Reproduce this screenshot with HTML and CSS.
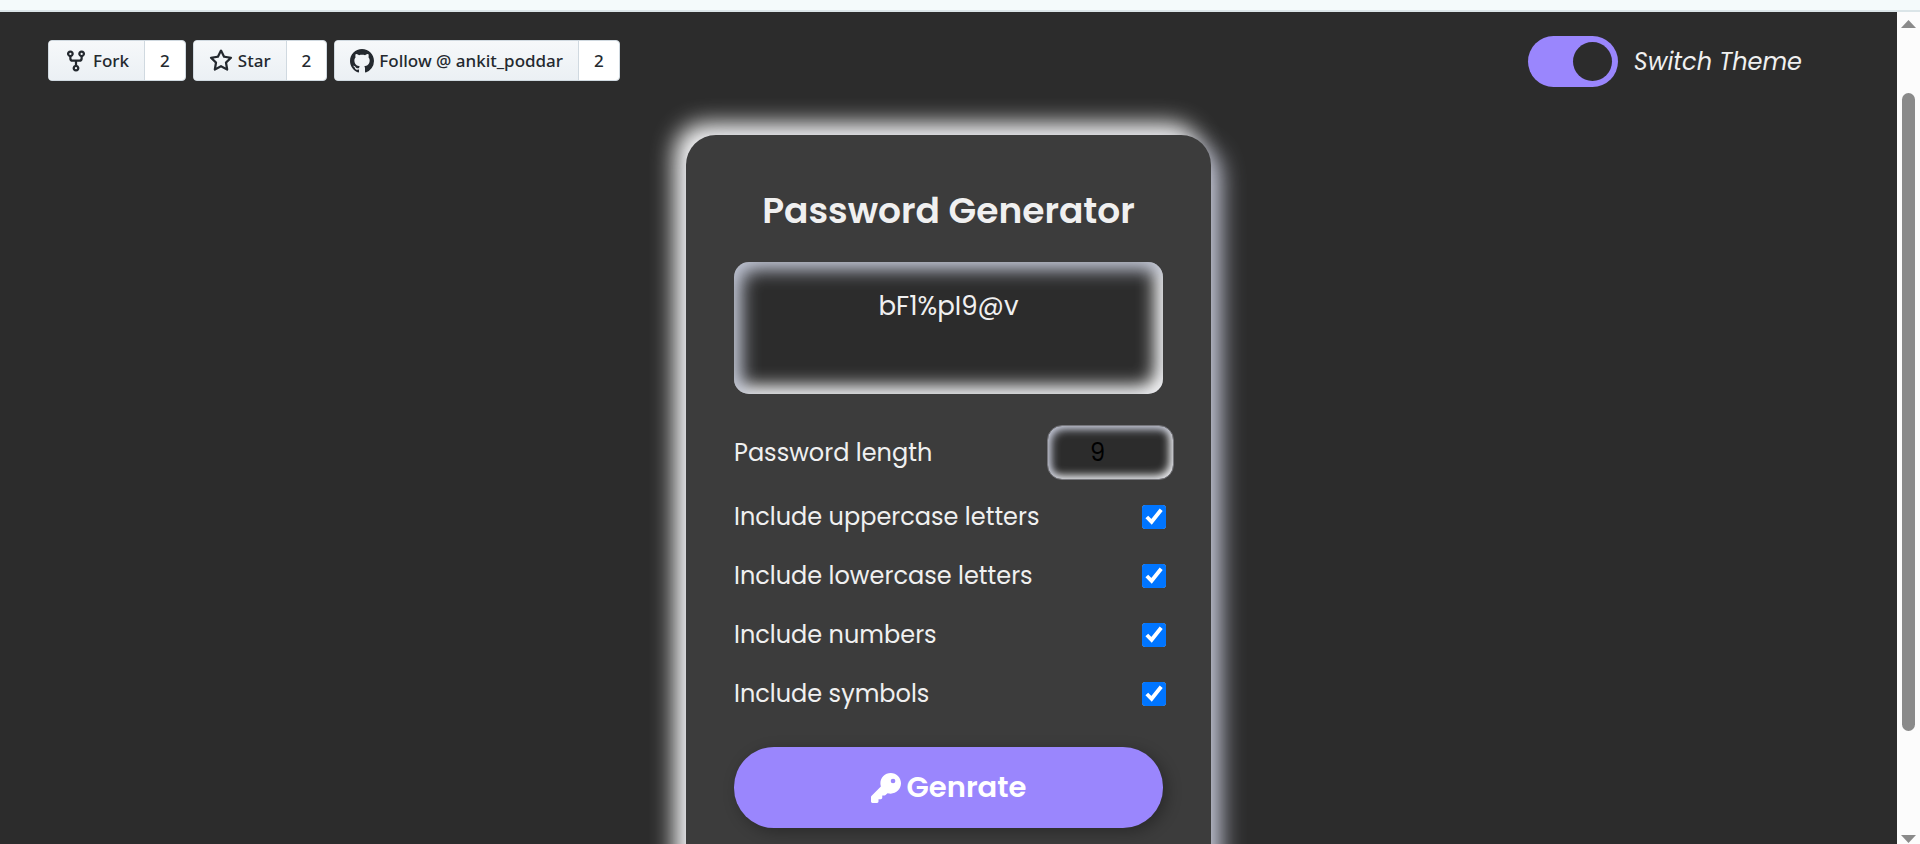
FILE: index.html
```html
<!DOCTYPE html>
<html lang="en">
<head>
<meta charset="utf-8">
<title>Password Generator</title>
<link rel="stylesheet" href="styles.css">
</head>
<body>
<div class="strip"></div>
<div class="viewport">
  <div class="page">
    <header class="topbar">
      <nav class="social">
        <div class="gh">
          <a class="gh-btn" href="#fork"><svg class="gh-icon" viewBox="0 0 16 16" aria-hidden="true"><path d="M5 5.372v.878c0 .414.336.75.75.75h4.5a.75.75 0 0 0 .75-.75v-.878a2.25 2.25 0 1 1 1.5 0v.878a2.25 2.25 0 0 1-2.25 2.25h-1.5v2.128a2.251 2.251 0 1 1-1.5 0V8.5h-1.5A2.25 2.25 0 0 1 3.500 6.25v-.878a2.25 2.25 0 1 1 1.5 0ZM5 3.25a.75.75 0 1 0-1.5 0 .75.75 0 0 0 1.5 0Zm6.750.75a.75.75 0 1 0 0-1.5.75.75 0 0 0 0 1.5Zm-3 8.750a.75.75 0 1 0-1.5 0 .75.75 0 0 0 1.5 0Z"/></svg>Fork</a><a class="gh-count" href="#forks">2</a>
        </div>
        <div class="gh">
          <a class="gh-btn" href="#star"><svg class="gh-icon" viewBox="0 0 16 16" aria-hidden="true"><path d="M8 .25a.75.75 0 0 1 .673.418l1.882 3.815 4.210.612a.75.75 0 0 1 .416 1.279l-3.046 2.970.719 4.192a.751.751 0 0 1-1.088.791L8 12.347l-3.766 1.980a.75.75 0 0 1-1.088-.790l.720-4.194L.818 6.374a.75.75 0 0 1 .416-1.280l4.210-.611L7.327.668A.75.75 0 0 1 8 .25Zm0 2.445L6.615 5.500a.75.75 0 0 1-.564.410l-3.097.450 2.240 2.184a.75.75 0 0 1 .216.664l-.528 3.084 2.769-1.456a.75.75 0 0 1 .698 0l2.770 1.456-.530-3.084a.75.75 0 0 1 .216-.664l2.240-2.183-3.096-.450a.75.75 0 0 1-.564-.410L8 2.694Z"/></svg>Star</a><a class="gh-count" href="#stars">2</a>
        </div>
        <div class="gh">
          <a class="gh-btn" href="#follow"><svg class="gh-icon" viewBox="0 0 16 16" aria-hidden="true"><path d="M8 0C3.58 0 0 3.58 0 8c0 3.54 2.29 6.530 5.470 7.590.4.070.550-.170.550-.380 0-.190-.010-.820-.010-1.490-2.010.370-2.530-.490-2.690-.940-.090-.230-.480-.940-.820-1.130-.280-.150-.680-.520-.010-.530.630-.010 1.080.580 1.230.820.720 1.210 1.870.870 2.330.660.070-.520.280-.870.510-1.070-1.780-.2-3.640-.890-3.640-3.950 0-.870.310-1.590.820-2.150-.080-.2-.360-1.020.080-2.120 0 0 .670-.210 2.200.820.640-.180 1.320-.270 2-.270s1.360.090 2 .270c1.530-1.040 2.200-.820 2.200-.820.440 1.100.160 1.920.080 2.120.510.560.820 1.270.820 2.150 0 3.070-1.870 3.750-3.650 3.950.290.250.540.730.540 1.480 0 1.070-.010 1.930-.010 2.200 0 .210.150.460.550.380A8.010 8.010 0 0 0 16 8c0-4.420-3.580-8-8-8Z"/></svg>Follow @ ankit_poddar</a><a class="gh-count" href="#followers">2</a>
        </div>
      </nav>
      <label class="theme"><input class="switch" type="checkbox" role="switch" checked><em class="theme-label">Switch Theme</em></label>
    </header>
    <main class="card">
      <h1 class="title">Password Generator</h1>
      <textarea class="result" aria-label="Generated password" readonly>bF1%pI9@v</textarea>
      <div class="row row-length"><label for="length">Password length</label><input class="length" id="length" type="text" inputmode="numeric" value="9"></div>
      <div class="options">
        <div class="row"><label for="upper">Include uppercase letters</label><input class="check" id="upper" type="checkbox" checked></div>
        <div class="row"><label for="lower">Include lowercase letters</label><input class="check" id="lower" type="checkbox" checked></div>
        <div class="row"><label for="numbers">Include numbers</label><input class="check" id="numbers" type="checkbox" checked></div>
        <div class="row"><label for="symbols">Include symbols</label><input class="check" id="symbols" type="checkbox" checked></div>
      </div>
      <button class="generate" type="button"><svg class="key" viewBox="0 0 512 512" aria-hidden="true"><path d="M336 352c97.200 0 176-78.800 176-176S433.200 0 336 0S160 78.800 160 176c0 18.700 2.900 36.800 8.300 53.700L7 391c-4.500 4.500-7 10.600-7 17v80c0 13.300 10.700 24 24 24h80c13.300 0 24-10.700 24-24V448h40c13.300 0 24-10.700 24-24V384h40c6.400 0 12.500-2.500 17-7l33.300-33.300c16.900 5.400 35 8.300 53.700 8.300zM376 96a40 40 0 1 1 0 80 40 40 0 1 1 0-80z"/></svg>Genrate</button>
    </main>
  </div>
  <div class="scrollbar" aria-hidden="true">
    <svg class="arrow" viewBox="0 0 15 8"><path d="M7.500 0 15 8H0Z"/></svg>
    <div class="track"><div class="thumb"></div></div>
    <svg class="arrow" viewBox="0 0 15 8"><path d="M0 0h15L7.500 8Z"/></svg>
  </div>
</div>
</body>
</html>
```
FILE: styles.css
```css
* { box-sizing: border-box; }

body {
  margin: 0;
  height: 100vh;
  display: flex;
  flex-direction: column;
  overflow: hidden;
  background: #2c2c2c;
  color: #f0f0f0;
  font-family: Poppins, Inter, "Open Sans", sans-serif;
  font-size: 24px;
}

.strip {
  flex: none;
  height: 12px;
  background: #f4fafb;
  border-bottom: 2px solid #dbe5e8;
}

.viewport {
  flex: 1;
  min-height: 0;
  display: flex;
}

.page {
  flex: 1;
  min-width: 0;
  overflow: hidden;
}

.topbar {
  display: flex;
  align-items: center;
  justify-content: space-between;
  padding: 24px 95px 0 48px;
}

.social {
  display: flex;
  gap: 7px;
  padding-bottom: 2px;
  font: 500 17px/24px "Noto Sans", "Open Sans", sans-serif;
}

.gh {
  display: flex;
  height: 41px;
  border: 1px solid #d0d9e0;
  border-radius: 4px;
  overflow: hidden;
  background: #fff;
}

.gh a {
  display: flex;
  align-items: center;
  color: #24292f;
  text-decoration: none;
}

.gh-btn {
  gap: 5px;
  padding: 0 15px;
  background: linear-gradient(#f6f8fa, #ebf0f4);
}

.gh .gh-count {
  padding: 0 15px;
  border-left: 1px solid #d0d9e0;
}

.gh-icon {
  width: 24px;
  height: 24px;
  fill: currentColor;
}

.theme {
  display: flex;
  align-items: center;
  gap: 16px;
}

.switch {
  appearance: none;
  display: flex;
  justify-content: flex-end;
  width: 90px;
  height: 51px;
  margin: 0;
  padding: 6px;
  border-radius: 26px;
  background: #9a86fd;
}

.switch::before {
  content: "";
  width: 39px;
  height: 39px;
  border-radius: 50%;
  background: #2c2c2c;
}

.card {
  width: 525px;
  max-width: 100%;
  min-height: 100vh;
  margin: 48px auto 0;
  padding: 48px;
  display: flex;
  flex-direction: column;
  border-radius: 30px;
  background: #3c3c3c;
  box-shadow: 10px 10px 23px #bfc2d2, -11px -11px 23px #fff;
}

.title {
  margin: 0 0 24px;
  font-size: 36px;
  font-weight: 600;
  line-height: 55px;
  text-align: center;
  white-space: nowrap;
}

.result {
  height: 132px;
  padding: 24px;
  border: 0;
  border-radius: 15px;
  resize: none;
  background: #2c2c2c;
  color: inherit;
  font: inherit;
  font-size: 26px;
  line-height: 40px;
  text-align: center;
  box-shadow: inset 8px 8px 18px #bcc1d0, inset -8px -8px 18px #fff;
}

.row {
  display: flex;
  align-items: center;
  justify-content: space-between;
  line-height: 36px;
}

.row-length {
  margin: 31px -11px 19px 0;
}

.length {
  width: 127px;
  height: 55px;
  padding: 0 45px 0 42px;
  border: 1px solid #77777c;
  border-radius: 15px;
  background: #2c2c2c;
  color: #000;
  font: inherit;
  box-shadow: inset 3px 3px 10px #c4c8d8, inset -3px -3px 10px #fff;
}

.options {
  display: grid;
  gap: 23px;
  margin-right: -3px;
}

.check {
  width: 24px;
  height: 24px;
  margin: 0;
  accent-color: #0075ff;
  clip-path: inset(0 round 3px);
}

.generate {
  display: flex;
  align-items: center;
  justify-content: center;
  gap: 6px;
  height: 81px;
  margin-top: 35px;
  border: 0;
  border-radius: 40px;
  background: #9a86fd;
  color: #fff;
  font: inherit;
  font-size: 29px;
  font-weight: 600;
  box-shadow: 4px 4px 15px rgba(0, 0, 0, 0.3);
}

.key {
  width: 30px;
  height: 30px;
  fill: currentColor;
}

.scrollbar {
  flex: none;
  width: 23px;
  display: flex;
  flex-direction: column;
  align-items: center;
  padding: 8px 0 1px;
  background: #fcfcfc;
}

.arrow {
  flex: none;
  width: 15px;
  height: 8px;
  fill: #8a8a8a;
}

.track {
  flex: 1;
  padding-top: 65px;
}

.thumb {
  width: 13px;
  height: 86%;
  border-radius: 7px;
  background: #8a8a8a;
}
```
